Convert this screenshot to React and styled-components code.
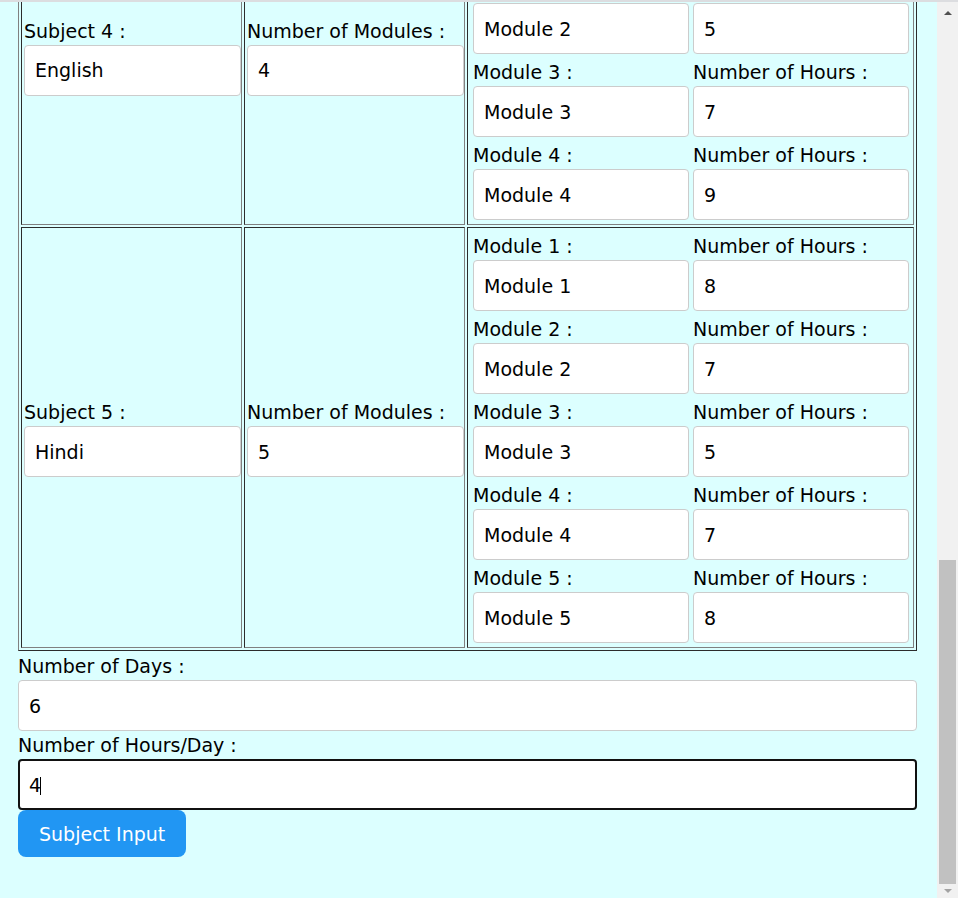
import React from 'react'
import styled, { createGlobalStyle, css } from 'styled-components'

const GlobalStyle = createGlobalStyle`
  html, body {
    margin: 0;
    height: 100%;
    overflow: hidden;
  }
  body {
    background: #dcffff;
    font-family: "DejaVu Sans", Verdana, sans-serif;
    font-size: 19px;
    color: #000;
  }
`

const Window = styled.div`
  display: flex;
  flex-direction: column;
  height: 898px;
`

const TopEdge = styled.div`
  flex-shrink: 0;
  height: 2px;
  background: #dcdde0;
`

const Viewport = styled.div`
  flex: 1;
  display: flex;
  min-height: 0;
`

const Page = styled.div`
  flex: 1;
  min-width: 0;
  overflow: hidden;
  display: flex;
  flex-direction: column;
  justify-content: flex-end;
  padding: 0 20px 41px 18px;
`

const Form = styled.form`
  flex-shrink: 0;
  margin: 0;
`

const Scrollbar = styled.div`
  width: 21px;
  flex-shrink: 0;
  background: #f1f1f1;
  display: flex;
  flex-direction: column;
`

const ArrowButton = styled.div`
  height: ${p => p.$h}px;
  display: flex;
  align-items: center;
  justify-content: center;
  flex-shrink: 0;
  &::before {
    content: '';
    border-left: 4px solid transparent;
    border-right: 4px solid transparent;
    ${p => p.$down
      ? css`border-top: 4px solid #a3a3a3;`
      : css`border-bottom: 4px solid #505050;`}
  }
`

const Track = styled.div`
  flex: 1;
  display: flex;
  flex-direction: column;
  justify-content: flex-end;
  padding: 0 2px;
`

const Thumb = styled.div`
  height: 324px;
  background: #c1c1c1;
`

const Table = styled.table`
  width: 899px;
  table-layout: fixed;
  border-collapse: separate;
  border-spacing: 2px;
  border: 1px outset grey;
  margin-bottom: 4px;
`

const Cell = styled.td`
  box-sizing: border-box;
  width: ${p => p.$w}px;
  border: 1px inset grey;
  padding: ${p => (p.$flush ? '0' : '0 0 4px 2px')};
  vertical-align: middle;
`

const ModuleGrid = styled.div`
  display: grid;
  grid-template-columns: 1fr 1fr;
  column-gap: 4px;
  padding: 0 4px 4px 5px;
`

const Field = styled.div`
  margin-top: ${p => p.$top ?? 7}px;
`

const Label = styled.div`
  line-height: 22px;
  margin-bottom: 3px;
  white-space: nowrap;
`

const InputWrap = styled.div`
  position: relative;
`

const TextInput = styled.input`
  display: block;
  box-sizing: border-box;
  width: 100%;
  height: 51px;
  margin: 0;
  padding: 0 10px;
  font-family: inherit;
  font-size: 19px;
  color: #000;
  background: #fff;
  border: 1px solid #ccc;
  border-radius: 4px;
  outline: none;
  ${p => p.$focused && css`
    border: 2px solid #111;
    padding: 0 9px;
  `}
`

const Caret = styled.span`
  position: absolute;
  left: 22px;
  top: 18px;
  width: 1px;
  height: 18px;
  background: #000;
`

const SubmitButton = styled.button`
  display: block;
  height: 47px;
  padding: 0 21px;
  border: none;
  border-radius: 8px;
  background: #2196f3;
  color: #fff;
  font-family: inherit;
  font-size: 19px;
`

const subjects = [
  { n: 4, name: 'English', hours: ['6', '5', '7', '9'] },
  { n: 5, name: 'Hindi', hours: ['8', '7', '5', '7', '8'] },
]

function LabeledInput({ label, value, top, focused }) {
  return (
    <Field $top={top}>
      <Label>{label}</Label>
      <InputWrap>
        <TextInput defaultValue={value} $focused={focused} />
        {focused && <Caret />}
      </InputWrap>
    </Field>
  )
}

function SubjectRow({ subject }) {
  return (
    <tr>
      <Cell $w={221}>
        <LabeledInput label={`Subject ${subject.n} :`} value={subject.name} />
      </Cell>
      <Cell $w={221}>
        <LabeledInput label="Number of Modules :" value={String(subject.hours.length)} />
      </Cell>
      <Cell $w={447} $flush>
        <ModuleGrid>
          {subject.hours.map((h, i) => (
            <React.Fragment key={i}>
              <LabeledInput label={`Module ${i + 1} :`} value={`Module ${i + 1}`} />
              <LabeledInput label="Number of Hours :" value={h} />
            </React.Fragment>
          ))}
        </ModuleGrid>
      </Cell>
    </tr>
  )
}

export default function App() {
  return (
    <Window>
      <GlobalStyle />
      <TopEdge />
      <Viewport>
        <Page>
          <Form onSubmit={e => e.preventDefault()}>
            <Table>
              <tbody>
                {subjects.map(s => <SubjectRow key={s.n} subject={s} />)}
              </tbody>
            </Table>
            <LabeledInput label="Number of Days :" value="6" top={0} />
            <LabeledInput label="Number of Hours/Day :" value="4" top={3} focused />
            <SubmitButton type="submit">Subject Input</SubmitButton>
          </Form>
        </Page>
        <Scrollbar>
          <ArrowButton $h={22} />
          <Track>
            <Thumb />
          </Track>
          <ArrowButton $h={14} $down />
        </Scrollbar>
      </Viewport>
    </Window>
  )
}
